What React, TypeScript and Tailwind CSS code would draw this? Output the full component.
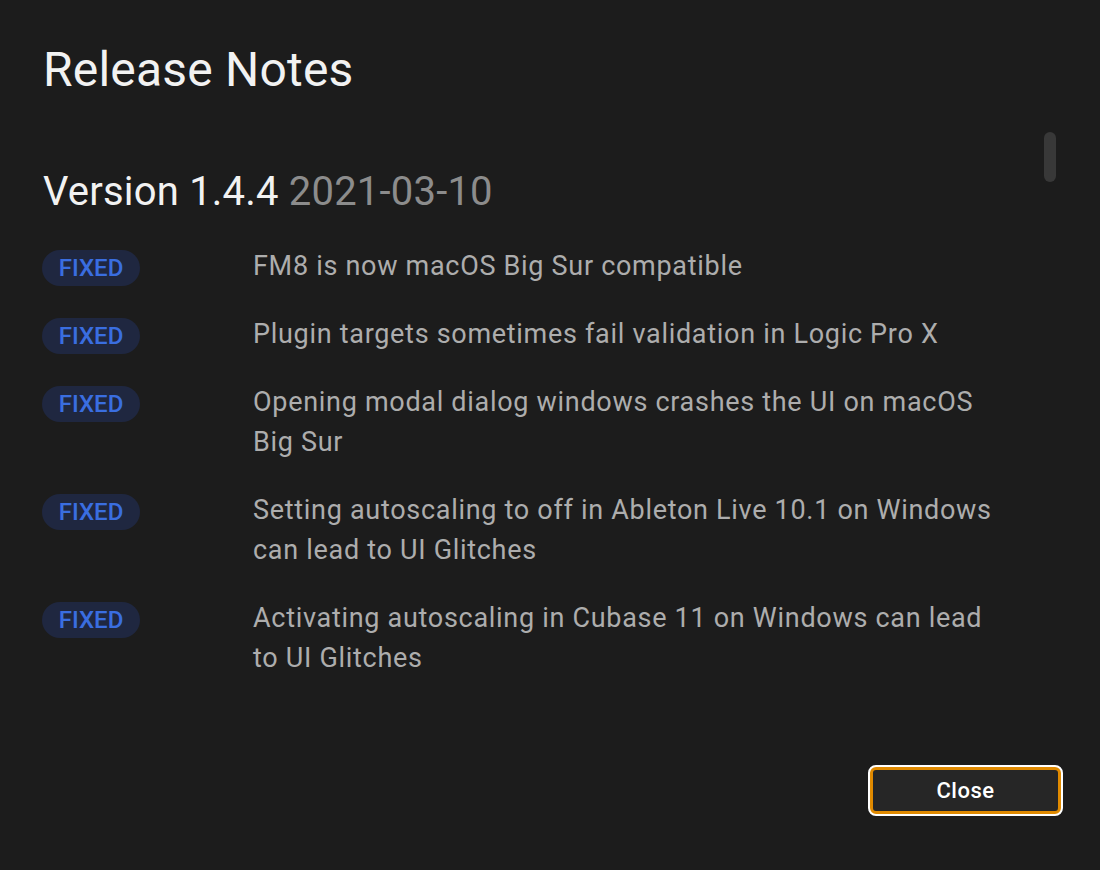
import React from 'react';

const notes = [
  'FM8 is now macOS Big Sur compatible',
  'Plugin targets sometimes fail validation in Logic Pro X',
  'Opening modal dialog windows crashes the UI on macOS Big Sur',
  'Setting autoscaling to off in Ableton Live 10.1 on Windows can lead to UI Glitches',
  'Activating autoscaling in Cubase 11 on Windows can lead to UI Glitches',
];

const App: React.FC = () => {
  return (
    <div
      className="w-[1100px] h-[870px] bg-[#1c1c1c] flex flex-col relative overflow-hidden"
      style={{ fontFamily: 'Roboto, "Noto Sans", sans-serif' }}
    >
      <h1 className="text-[48px] leading-none text-[#f2f2f2] pl-[43px] pt-[46px] tracking-[0.2px]">Release Notes</h1>

      {/* scrollbar thumb */}
      <div className="absolute left-[1044px] top-[132px] w-[12px] h-[50px] rounded-full bg-[#383838]" />

      <div className="pl-[42px] pt-[78px] w-[1000px]">
        <h2 className="text-[40px] leading-none text-[#f2f2f2] pl-px tracking-[0.2px]">
          Version 1.4.4 <span className="text-[#8c8c8c]">2021-03-10</span>
        </h2>

        <div className="flex flex-col gap-[28px] pt-[34px]">
          {notes.map((n, i) => (
            <div key={i} className="flex items-start">
              <div className="w-[211px] shrink-0 pt-[4px]">
                <span className="inline-flex items-center justify-center w-[98px] h-[36px] rounded-full bg-[#1f2740] text-[#3a6ee0] text-[24px] font-medium">
                  FIXED
                </span>
              </div>
              <p className="text-[27px] leading-[40px] text-[#adadad] max-w-[748px] tracking-[0.7px]">{n}</p>
            </div>
          ))}
        </div>
      </div>

      <div className="flex-1" />
      <div className="flex justify-end pr-[37px] pb-[54px]">
        <button className="w-[195px] h-[51px] rounded-[8px] border-2 border-white p-0 bg-white">
          <span className="flex items-center justify-center w-full h-full rounded-[6px] border-[3px] border-[#e08a00] bg-[#262626] text-white text-[22px] font-medium tracking-[0.5px]">
            Close
          </span>
        </button>
      </div>
    </div>
  );
};

export default App;
